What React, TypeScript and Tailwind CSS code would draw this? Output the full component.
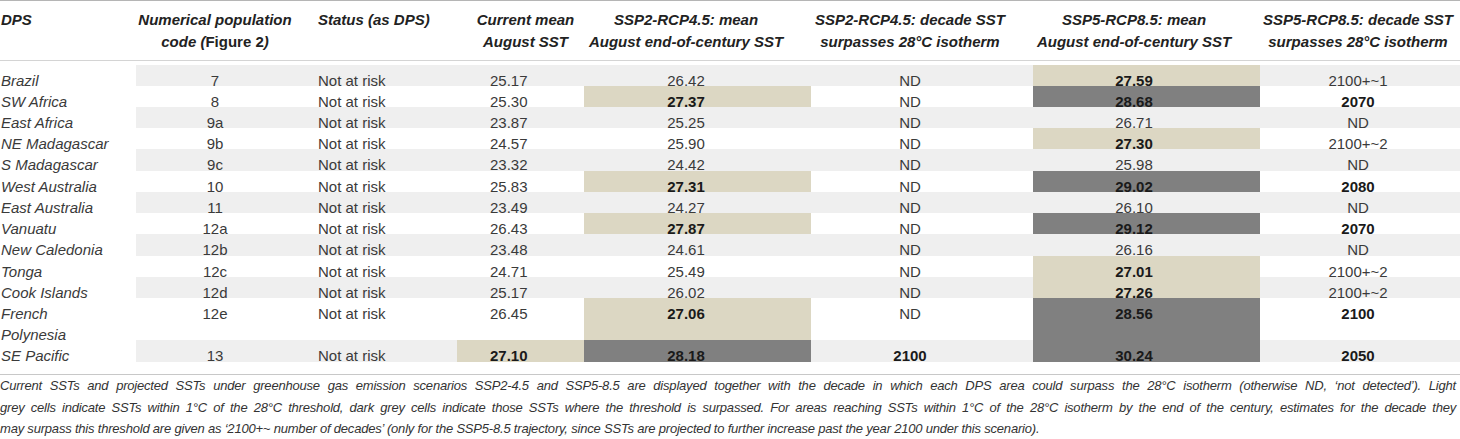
import React from "react";

type Cell = { v: string; bg?: "b" | "d"; bold?: boolean };
type Row = { dps: React.ReactNode; h: string; cells: Cell[] };

const GRID =
  "grid grid-cols-[136px_158px_163px_127px_227px_222px_227px_200px]";

const ALIGN = [
  "pl-[1px] text-left",
  "text-center",
  "pl-[24px] text-left",
  "pl-[33px] text-left",
  "text-center pr-[23px]",
  "text-center pr-[24px]",
  "text-center pr-[25px]",
  "text-center pr-[4px]",
];

const HALIGN = [
  "pl-[1px] text-left",
  "text-center",
  "pl-[24px] text-left",
  "text-center pl-[10px]",
  "text-center pr-[23px]",
  "text-center pr-[24px]",
  "text-center pr-[25px]",
  "text-center pr-[4px]",
];

const c = (v: string, bg?: "b" | "d", bold?: boolean): Cell => ({ v, bg, bold });
const NR = "Not at risk";

const rows: Row[] = [
  { dps: "Brazil", h: "h-[21px]", cells: [c("7"), c(NR), c("25.17"), c("26.42"), c("ND"), c("27.59", "b", true), c("2100+~1")] },
  { dps: "SW Africa", h: "h-[21px]", cells: [c("8"), c(NR), c("25.30"), c("27.37", "b", true), c("ND"), c("28.68", "d", true), c("2070", undefined, true)] },
  { dps: "East Africa", h: "h-[21px]", cells: [c("9a"), c(NR), c("23.87"), c("25.25"), c("ND"), c("26.71"), c("ND")] },
  { dps: "NE Madagascar", h: "h-[21px]", cells: [c("9b"), c(NR), c("24.57"), c("25.90"), c("ND"), c("27.30", "b", true), c("2100+~2")] },
  { dps: "S Madagascar", h: "h-[22px]", cells: [c("9c"), c(NR), c("23.32"), c("24.42"), c("ND"), c("25.98"), c("ND")] },
  { dps: "West Australia", h: "h-[21px]", cells: [c("10"), c(NR), c("25.83"), c("27.31", "b", true), c("ND"), c("29.02", "d", true), c("2080", undefined, true)] },
  { dps: "East Australia", h: "h-[21px]", cells: [c("11"), c(NR), c("23.49"), c("24.27"), c("ND"), c("26.10"), c("ND")] },
  { dps: "Vanuatu", h: "h-[21px]", cells: [c("12a"), c(NR), c("26.43"), c("27.87", "b", true), c("ND"), c("29.12", "d", true), c("2070", undefined, true)] },
  { dps: "New Caledonia", h: "h-[22px]", cells: [c("12b"), c(NR), c("23.48"), c("24.61"), c("ND"), c("26.16"), c("ND")] },
  { dps: "Tonga", h: "h-[21px]", cells: [c("12c"), c(NR), c("24.71"), c("25.49"), c("ND"), c("27.01", "b", true), c("2100+~2")] },
  { dps: "Cook Islands", h: "h-[21px]", cells: [c("12d"), c(NR), c("25.17"), c("26.02"), c("ND"), c("27.26", "b", true), c("2100+~2")] },
  { dps: (<>French<br />Polynesia</>), h: "h-[42px]", cells: [c("12e"), c(NR), c("26.45"), c("27.06", "b", true), c("ND"), c("28.56", "d", true), c("2100", undefined, true)] },
  { dps: "SE Pacific", h: "h-[22px]", cells: [c("13"), c(NR), c("27.10", "b", true), c("28.18", "d", true), c("2100", undefined, true), c("30.24", "d", true), c("2050", undefined, true)] },
];

const headers: React.ReactNode[] = [
  "DPS",
  (<>Numerical population<br />code (<span className="not-italic">Figure 2</span>)</>),
  "Status (as DPS)",
  (<>Current mean<br />August SST</>),
  (<>SSP2-RCP4.5: mean<br />August end-of-century SST</>),
  (<>SSP2-RCP4.5: decade SST<br />surpasses 28°C isotherm</>),
  (<>SSP5-RCP8.5: mean<br />August end-of-century SST</>),
  (<>SSP5-RCP8.5: decade SST<br />surpasses 28°C isotherm</>),
];

export default function App() {
  return (
    <div className="w-[1460px] h-[439px] bg-white overflow-hidden font-['Liberation_Sans',Arial,sans-serif] text-[15px] text-[#3a3a3a]">
      <div className={`${GRID} border-t border-[#b5b5b5] border-b border-b-[#d4d4d4] pt-[8px] pb-[7px]`}>
        {headers.map((h, i) => (
          <div key={i} className={`${HALIGN[i]} whitespace-nowrap font-bold italic leading-[22px] text-[#222]`}>
            {h}
          </div>
        ))}
      </div>
      <div className="mt-[4px]">
        {rows.map((r, ri) => {
          const stripe = ri % 2 === 0 ? "bg-[#efefef]" : "bg-white";
          return (
            <div key={ri} className={GRID}>
              <div className={`${r.h} ${ALIGN[0]} pt-[5px] leading-[21px] italic whitespace-nowrap`}>{r.dps}</div>
              {r.cells.map((cell, ci) => {
                const bg = cell.bg === "b" ? "bg-[#dcd7c3]" : cell.bg === "d" ? "bg-[#808080]" : stripe;
                return (
                  <div
                    key={ci}
                    className={`${r.h} ${bg} ${ALIGN[ci + 1]} pt-[5px] leading-[21px] whitespace-nowrap ${cell.bold ? "font-bold text-[#1a1a1a]" : ""}`}
                  >
                    {cell.v}
                  </div>
                );
              })}
            </div>
          );
        })}
      </div>
      <div className="mt-[12px] border-t border-[#c8c8c8] pr-[4px] italic text-[13px] tracking-[-0.2px] leading-[21.5px] text-[#333]">
        <div className="text-justify [text-align-last:justify] whitespace-nowrap">
          Current SSTs and projected SSTs under greenhouse gas emission scenarios SSP2-4.5 and SSP5-8.5 are displayed together with the decade in which each DPS area could surpass the 28°C isotherm (otherwise ND, ‘not detected’). Light
        </div>
        <div className="text-justify [text-align-last:justify] whitespace-nowrap">
          grey cells indicate SSTs within 1°C of the 28°C threshold, dark grey cells indicate those SSTs where the threshold is surpassed. For areas reaching SSTs within 1°C of the 28°C isotherm by the end of the century, estimates for the decade they
        </div>
        <div className="whitespace-nowrap">
          may surpass this threshold are given as ‘2100+~ number of decades’ (only for the SSP5-8.5 trajectory, since SSTs are projected to further increase past the year 2100 under this scenario).
        </div>
      </div>
    </div>
  );
}
